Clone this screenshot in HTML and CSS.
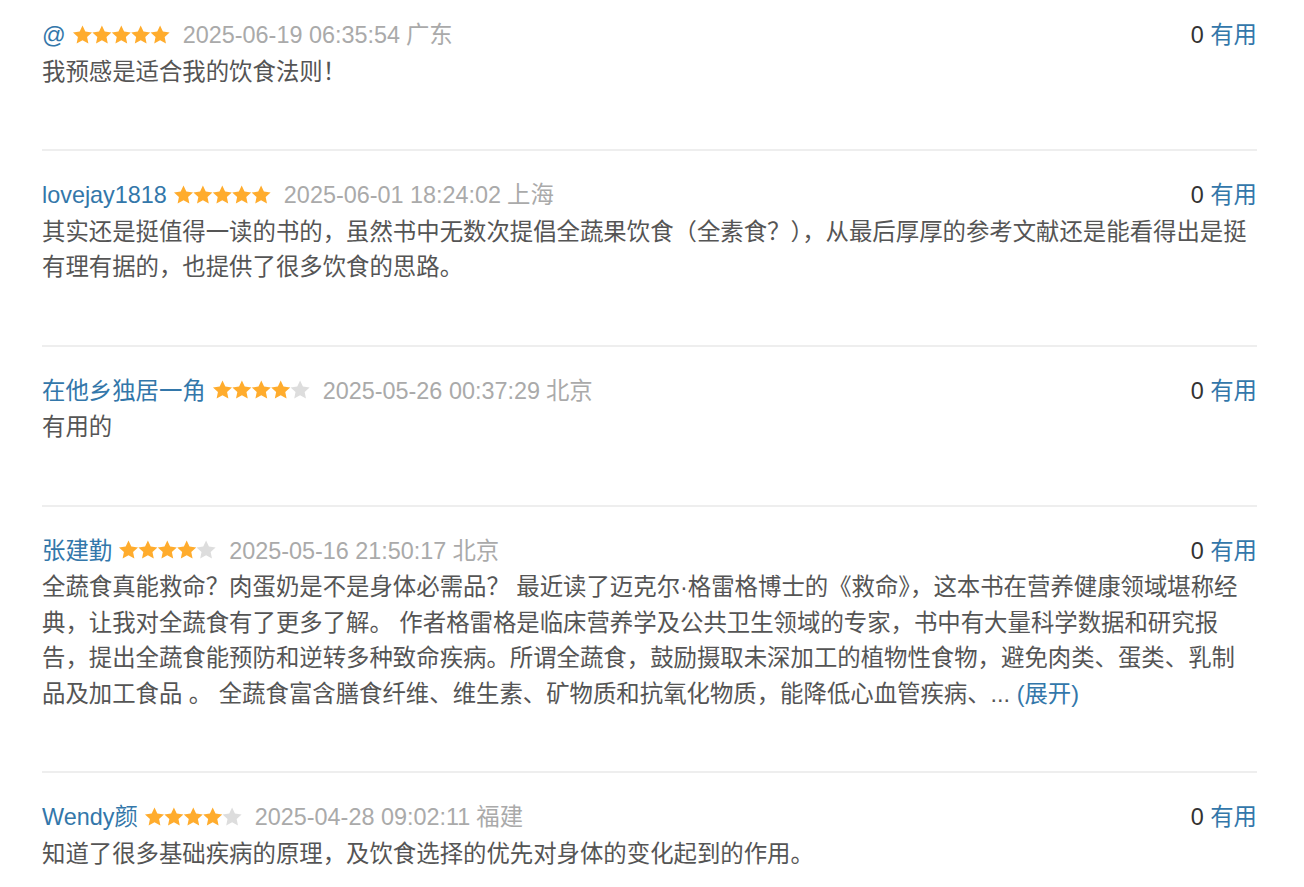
FILE: index.html
```html
<!DOCTYPE html>
<html lang="zh-CN">
<head>
<meta charset="utf-8">
<title>短评</title>
<link rel="stylesheet" href="styles.css">
</head>
<body>
<svg width="0" height="0" class="defs" aria-hidden="true">
  <defs>
    <polygon id="st" points="10,0.5 12.82,6.62 19.51,7.41 14.57,11.98 15.88,18.59 10,15.3 4.12,18.59 5.43,11.98 0.49,7.41 7.18,6.62"/>
  </defs>
</svg>
<div class="list">

  <div class="comment">
    <div class="head">
      <div class="info">
        <a class="user" href="#">@</a>
        <svg class="stars" viewBox="0 0 97 19"><use href="#st" x="0" class="on"/><use href="#st" x="19.4" class="on"/><use href="#st" x="38.8" class="on"/><use href="#st" x="58.2" class="on"/><use href="#st" x="77.6" class="on"/></svg>
        <span class="time">2025-06-19 06:35:54</span>
        <span class="loc">广东</span>
      </div>
      <div class="vote"><span class="count">0</span> <a href="#" class="useful">有用</a></div>
    </div>
    <p class="text">我预感是适合我的饮食法则！</p>
  </div>

  <div class="comment">
    <div class="head">
      <div class="info">
        <a class="user" href="#">lovejay1818</a>
        <svg class="stars" viewBox="0 0 97 19"><use href="#st" x="0" class="on"/><use href="#st" x="19.4" class="on"/><use href="#st" x="38.8" class="on"/><use href="#st" x="58.2" class="on"/><use href="#st" x="77.6" class="on"/></svg>
        <span class="time">2025-06-01 18:24:02</span>
        <span class="loc">上海</span>
      </div>
      <div class="vote"><span class="count">0</span> <a href="#" class="useful">有用</a></div>
    </div>
    <p class="text">其实还是挺值得一读的书的，虽然书中无数次提倡全蔬果饮食（全素食？），从最后厚厚的参考文献还是能看得出是挺有理有据的，也提供了很多饮食的思路。</p>
  </div>

  <div class="comment">
    <div class="head">
      <div class="info">
        <a class="user" href="#">在他乡独居一角</a>
        <svg class="stars" viewBox="0 0 97 19"><use href="#st" x="0" class="on"/><use href="#st" x="19.4" class="on"/><use href="#st" x="38.8" class="on"/><use href="#st" x="58.2" class="on"/><use href="#st" x="77.6" class="off"/></svg>
        <span class="time">2025-05-26 00:37:29</span>
        <span class="loc">北京</span>
      </div>
      <div class="vote"><span class="count">0</span> <a href="#" class="useful">有用</a></div>
    </div>
    <p class="text">有用的</p>
  </div>

  <div class="comment">
    <div class="head">
      <div class="info">
        <a class="user" href="#">张建勤</a>
        <svg class="stars" viewBox="0 0 97 19"><use href="#st" x="0" class="on"/><use href="#st" x="19.4" class="on"/><use href="#st" x="38.8" class="on"/><use href="#st" x="58.2" class="on"/><use href="#st" x="77.6" class="off"/></svg>
        <span class="time">2025-05-16 21:50:17</span>
        <span class="loc">北京</span>
      </div>
      <div class="vote"><span class="count">0</span> <a href="#" class="useful">有用</a></div>
    </div>
    <p class="text">全蔬食真能救命？肉蛋奶是不是身体必需品？ 最近读了迈克尔·格雷格博士的《救命》，这本书在营养健康领域堪称经典，让我对全蔬食有了更多了解。 作者格雷格是临床营养学及公共卫生领域的专家，书中有大量科学数据和研究报告，提出全蔬食能预防和逆转多种致命疾病。所谓全蔬食，鼓励摄取未深加工的植物性食物，避免肉类、蛋类、乳制品及加工食品 。 全蔬食富含膳食纤维、维生素、矿物质和抗氧化物质，能降低心血管疾病、...&nbsp;<a href="#" class="more">(展开)</a></p>
  </div>

  <div class="comment">
    <div class="head">
      <div class="info">
        <a class="user" href="#">Wendy颜</a>
        <svg class="stars" viewBox="0 0 97 19"><use href="#st" x="0" class="on"/><use href="#st" x="19.4" class="on"/><use href="#st" x="38.8" class="on"/><use href="#st" x="58.2" class="on"/><use href="#st" x="77.6" class="off"/></svg>
        <span class="time">2025-04-28 09:02:11</span>
        <span class="loc">福建</span>
      </div>
      <div class="vote"><span class="count">0</span> <a href="#" class="useful">有用</a></div>
    </div>
    <p class="text">知道了很多基础疾病的原理，及饮食选择的优先对身体的变化起到的作用。</p>
  </div>

</div>
</body>
</html>
```

FILE: styles.css
```css
html, body {
  margin: 0;
  padding: 0;
  background: #ffffff;
}

body {
  font-family: "Liberation Sans", Arial, "Noto Sans CJK SC", sans-serif;
  font-size: 23.4px;
  color: #555555;
}

.defs {
  position: absolute;
  width: 0;
  height: 0;
}

.list {
  width: 1215px;
  margin-left: 42px;
}

.comment {
  padding: 26px 0 59px;
  border-bottom: 2px solid #eeeeee;
}

.comment:first-child {
  padding-top: 17px;
}

.head {
  display: flex;
  justify-content: space-between;
  align-items: center;
  height: 36px;
  line-height: 36px;
  margin-bottom: 1.5px;
}

.info {
  display: flex;
  align-items: center;
  white-space: nowrap;
}

.user {
  color: #3377aa;
  text-decoration: none;
}

.stars {
  width: 98px;
  height: 19px;
  margin-left: 6px;
  margin-right: 13px;
  position: relative;
  top: -1px;
}

.stars .on {
  fill: #ffac2d;
}

.stars .off {
  fill: #dddddd;
}

.time,
.loc {
  color: #aaaaaa;
}

.loc {
  margin-left: 6px;
}

.vote {
  white-space: nowrap;
}

.count {
  color: #333333;
}

.useful {
  color: #3377aa;
  text-decoration: none;
}

.text {
  margin: 0;
  line-height: 35.5px;
}

.more {
  color: #3377aa;
  text-decoration: none;
}
```
